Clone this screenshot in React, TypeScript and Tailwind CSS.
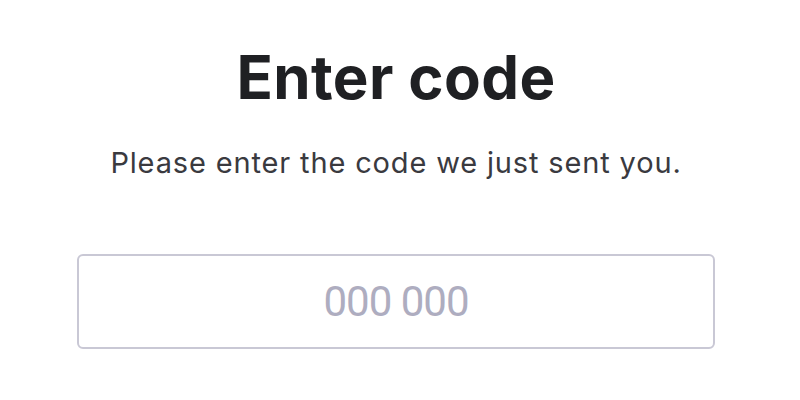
import React from "react";

export default function App() {
  return (
    <div className="w-[800px] h-[400px] bg-white overflow-hidden" style={{ fontFamily: "Inter, 'Noto Sans', sans-serif" }}>
      <div className="ml-[77px] w-[638px] flex flex-col items-center">
        <h1 className="mt-[42px] text-[60px] leading-[70px] font-bold text-[#1f2023] tracking-[0.4px]">Enter code</h1>
        <p className="mt-[33px] text-[29px] leading-[36px] text-[#3a3a3f] tracking-[0.85px]">Please enter the code we just sent you.</p>
        <div className="mt-[73px] w-full h-[95px] border-2 border-[#c9c8d5] rounded-[6px] flex items-center justify-center">
          <input
            className="w-full h-full text-center bg-transparent outline-none text-[42px] tracking-[-1px] text-[#1f2023] placeholder:text-[#aeadc0]"
            style={{ fontFamily: "Roboto, sans-serif" }}
            placeholder="000 000"
          />
        </div>
      </div>
    </div>
  );
}
